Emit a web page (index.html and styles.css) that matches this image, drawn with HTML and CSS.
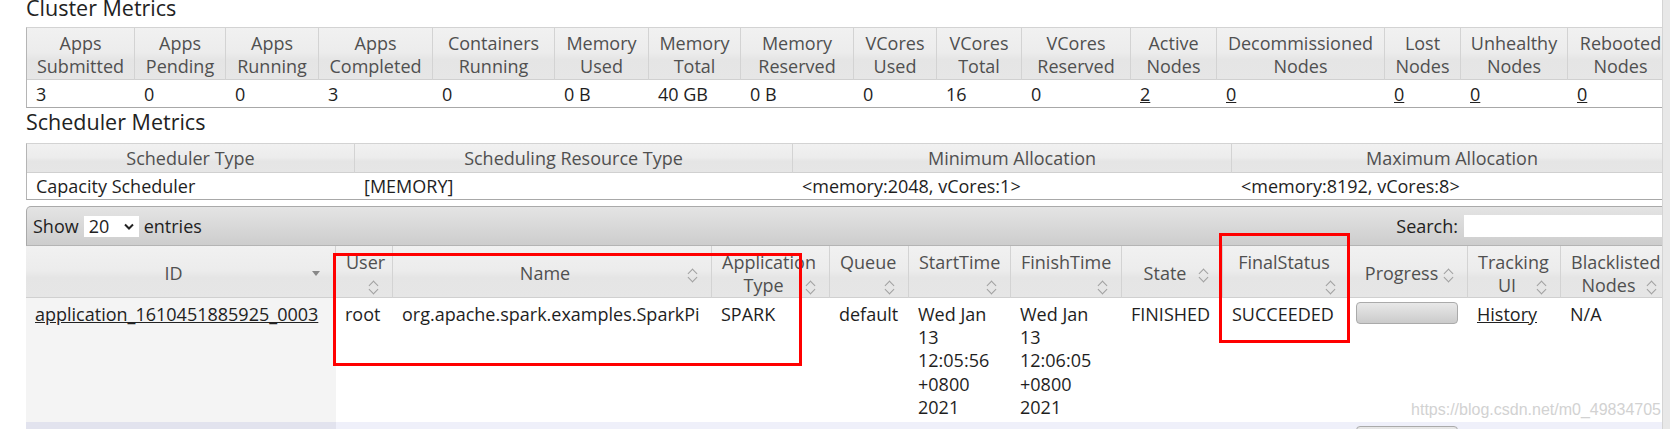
FILE: index.html
```html
<!DOCTYPE html>
<html lang="en">
  <head>
    <meta charset="UTF-8" />
    <title>All Applications</title>
    <link rel="stylesheet" href="styles.css">
  </head>
  <body>
    <div class="page">
      <div class="content">
        <h3 class="section-title first">Cluster Metrics</h3>
        <table class="metrics cluster">
          <thead>
            <tr>
              <th>Apps Submitted</th>
              <th>Apps Pending</th>
              <th>Apps Running</th>
              <th>Apps Completed</th>
              <th>Containers Running</th>
              <th>Memory Used</th>
              <th>Memory Total</th>
              <th>Memory Reserved</th>
              <th>VCores Used</th>
              <th>VCores Total</th>
              <th>VCores Reserved</th>
              <th>Active Nodes</th>
              <th>Decommissioned Nodes</th>
              <th>Lost Nodes</th>
              <th>Unhealthy Nodes</th>
              <th>Rebooted Nodes</th>
            </tr>
          </thead>
          <tbody>
            <tr>
              <td>3</td>
              <td>0</td>
              <td>0</td>
              <td>3</td>
              <td>0</td>
              <td>0 B</td>
              <td>40 GB</td>
              <td>0 B</td>
              <td>0</td>
              <td>16</td>
              <td>0</td>
              <td><a href="#">2</a></td>
              <td><a href="#">0</a></td>
              <td><a href="#">0</a></td>
              <td><a href="#">0</a></td>
              <td><a href="#">0</a></td>
            </tr>
          </tbody>
        </table>

        <h3 class="section-title">Scheduler Metrics</h3>
        <table class="metrics scheduler">
          <thead>
            <tr>
              <th>Scheduler Type</th>
              <th>Scheduling Resource Type</th>
              <th>Minimum Allocation</th>
              <th>Maximum Allocation</th>
            </tr>
          </thead>
          <tbody>
            <tr>
              <td>Capacity Scheduler</td>
              <td>[MEMORY]</td>
              <td>&lt;memory:2048, vCores:1&gt;</td>
              <td>&lt;memory:8192, vCores:8&gt;</td>
            </tr>
          </tbody>
        </table>

        <div class="apps">
          <div class="toolbar">
            <label class="length">
              Show
              <span class="select">20
                <svg width="10" height="7" viewBox="0 0 10 7"><polyline points="1,1.5 5,5.5 9,1.5" fill="none" stroke="#222" stroke-width="2"/></svg>
              </span>
              entries
            </label>
            <label class="search">Search: <input type="text"></label>
          </div>
          <table class="apps-table">
            <thead>
              <tr>
                <th>ID<span class="sort-desc"></span></th>
                <th>User<br><span class="sort"></span></th>
                <th>Name<span class="sort"></span></th>
                <th>Application<br>Type<span class="sort"></span></th>
                <th>Queue<br><span class="sort"></span></th>
                <th>StartTime<br><span class="sort"></span></th>
                <th>FinishTime<br><span class="sort"></span></th>
                <th>State<span class="sort"></span></th>
                <th>FinalStatus<br><span class="sort"></span></th>
                <th>Progress<span class="sort"></span></th>
                <th>Tracking<br>UI<span class="sort"></span></th>
                <th>Blacklisted<br>Nodes<span class="sort"></span></th>
              </tr>
            </thead>
            <tbody>
              <tr>
                <td class="sorted"><a href="#">application_1610451885925_0003</a></td>
                <td>root</td>
                <td>org.apache.spark.examples.SparkPi</td>
                <td>SPARK</td>
                <td>default</td>
                <td class="wrap">Wed Jan 13 12:05:56 +0800 2021</td>
                <td class="wrap">Wed Jan 13 12:06:05 +0800 2021</td>
                <td>FINISHED</td>
                <td>SUCCEEDED</td>
                <td class="progress-cell"><div class="progress"></div></td>
                <td><a href="#">History</a></td>
                <td>N/A</td>
              </tr>
              <tr class="odd">
                <td class="sorted"></td>
                <td></td>
                <td></td>
                <td></td>
                <td></td>
                <td></td>
                <td></td>
                <td></td>
                <td></td>
                <td class="progress-cell"><div class="progress"></div></td>
                <td></td>
                <td></td>
              </tr>
            </tbody>
          </table>
        </div>

        <div class="mark mark-app"></div>
        <div class="mark mark-status"></div>
        <div class="watermark">https://blog.csdn.net/m0_49834705</div>
      </div>
      <div class="scrollbar"></div>
    </div>
  </body>
</html>
```

FILE: styles.css
```css
* {
  margin: 0;
  padding: 0;
  box-sizing: border-box;
}

html,
body {
  height: 429px;
  overflow: hidden;
}

body {
  font-family: "Open Sans", "Noto Sans", sans-serif;
  font-size: 18px;
  color: #1e1e1e;
  background: #fff;
}

a {
  color: #222;
  text-decoration: underline;
}

.page {
  display: flex;
  height: 429px;
}

.content {
  flex: 1;
  position: relative;
  overflow: hidden;
  padding-left: 26px;
}

.scrollbar {
  width: 8px;
  background: #e8e8e8;
  border-left: 1px solid #d4d4d4;
}

.section-title {
  font-size: 21.5px;
  font-weight: normal;
  line-height: 24px;
  color: #222;
  margin: 2.5px 0 9px;
}

.section-title.first {
  margin-top: -4.5px;
  margin-bottom: 7.5px;
}

table {
  border-collapse: separate;
  border-spacing: 0;
  table-layout: fixed;
  line-height: 23.3px;
}

.metrics {
  border-left: 1px solid #b5b5b5;
  border-top: 1px solid #d3d3d3;
  border-bottom: 1px solid #a8a8a8;
}

.metrics th,
.apps-table th {
  font-weight: normal;
  color: #505050;
  text-align: center;
  vertical-align: middle;
  background: linear-gradient(#f1f1f1, #ececec 48%, #e5e5e5 62%, #e6e6e6);
  border-right: 1px solid #d3d3d3;
  border-bottom: 1px solid #d0d0d0;
}

.metrics th {
  padding: 3.5px 4px 0.5px;
}

.metrics td {
  text-align: left;
  white-space: nowrap;
  overflow: hidden;
  padding: 3.5px 4px 0.5px 9px;
}

.cluster {
  width: 1647px;
}

.cluster th:nth-child(1) { width: 108px; }
.cluster th:nth-child(2) { width: 91px; }
.cluster th:nth-child(3) { width: 93px; }
.cluster th:nth-child(4) { width: 114px; }
.cluster th:nth-child(5) { width: 122px; }
.cluster th:nth-child(6) { width: 94px; }
.cluster th:nth-child(7) { width: 92px; }
.cluster th:nth-child(8) { width: 113px; }
.cluster th:nth-child(9) { width: 83px; }
.cluster th:nth-child(10) { width: 85px; }
.cluster th:nth-child(11) { width: 109px; }
.cluster th:nth-child(12) { width: 86px; }
.cluster th:nth-child(13) { width: 168px; }
.cluster th:nth-child(14) { width: 76px; }
.cluster th:nth-child(15) { width: 107px; }
.cluster th:nth-child(16) { width: 106px; }

.scheduler {
  width: 1646px;
}

.scheduler th {
  padding: 2.5px 4px 1.5px;
}

.scheduler td {
  padding: 2.5px 4px 0.9px 9px;
}

.scheduler th:nth-child(1) { width: 328px; }
.scheduler th:nth-child(2) { width: 438px; }
.scheduler th:nth-child(3) { width: 439px; }
.scheduler th:nth-child(4) { width: 441px; }

/* applications table */

.apps {
  margin-top: 6px;
  width: 1645px;
}

.toolbar {
  display: flex;
  align-items: center;
  height: 40px;
  padding: 0 8px 0 6px;
  border: 1px solid #aaa;
  border-bottom-color: #b4b4b4;
  border-radius: 5px 5px 0 0;
  background: linear-gradient(#e4e4e4, #cdcdcd);
  color: #222;
}

.length {
  display: flex;
  align-items: center;
  gap: 5px;
}

.select {
  display: flex;
  align-items: center;
  justify-content: space-between;
  width: 55px;
  height: 21px;
  padding: 0 5px;
  background: #fff;
}

.search {
  margin-left: auto;
  display: flex;
  align-items: center;
  gap: 6px;
}

.search input {
  width: 198px;
  height: 22px;
  border: 0;
  background: #fff;
  font: inherit;
}

.apps-table {
  width: 1645px;
}

.apps-table th {
  height: 52px;
  padding: 4px 14px 0 10px;
}

.apps-table th:nth-child(1) { width: 310px; }
.apps-table th:nth-child(2) { width: 57px; }
.apps-table th:nth-child(3) { width: 319px; }
.apps-table th:nth-child(4) { width: 118px; }
.apps-table th:nth-child(5) { width: 79px; }
.apps-table th:nth-child(6) { width: 102px; }
.apps-table th:nth-child(7) { width: 111px; }
.apps-table th:nth-child(8) { width: 101px; }
.apps-table th:nth-child(9) { width: 127px; }
.apps-table th:nth-child(10) { width: 118px; }
.apps-table th:nth-child(11) { width: 93px; }
.apps-table th:nth-child(12) { width: 110px; }

.apps-table td {
  height: 124px;
  vertical-align: top;
  white-space: nowrap;
  padding: 4.5px 8px 0 9px;
}

.apps-table td.wrap {
  white-space: normal;
  padding-right: 24px;
}

.apps-table td.sorted {
  background: #f4f4f4;
}

.apps-table tr.odd td {
  background: #eff0fa;
}

.apps-table tr.odd td.sorted {
  background: #e2e3ee;
}

.apps-table td.progress-cell {
  padding-left: 6px;
  padding-top: 3.5px;
}

.progress {
  width: 102px;
  height: 22px;
  border: 1px solid #aaa;
  border-radius: 4px;
  background: linear-gradient(#e8e8e8, #cbcbcb);
}

.sort,
.sort-desc {
  float: right;
  position: relative;
  width: 10px;
  height: 23.3px;
}

.sort::before,
.sort::after {
  content: "";
  position: absolute;
  left: 2px;
  width: 6px;
  height: 6px;
  border: solid #a0a0a0;
  transform: rotate(45deg);
}

.sort::before {
  top: 8px;
  border-width: 1.5px 0 0 1.5px;
}

.sort::after {
  top: 12px;
  border-width: 0 1.5px 1.5px 0;
}

.sort-desc::after {
  content: "";
  position: absolute;
  left: 1px;
  top: 9px;
  border-left: 4px solid transparent;
  border-right: 4px solid transparent;
  border-top: 5px solid #888;
}

/* annotations drawn over the screenshot */

.mark {
  position: absolute;
  border: 3px solid #f00;
}

.mark-app {
  left: 333px;
  top: 252.5px;
  width: 469px;
  height: 113.5px;
}

.mark-status {
  left: 1219px;
  top: 232.5px;
  width: 131px;
  height: 110.5px;
}

.watermark {
  position: absolute;
  right: 1px;
  top: 401px;
  font: 16px/18px "Liberation Sans", Arial, sans-serif;
  color: #d2d2d2;
}
```
